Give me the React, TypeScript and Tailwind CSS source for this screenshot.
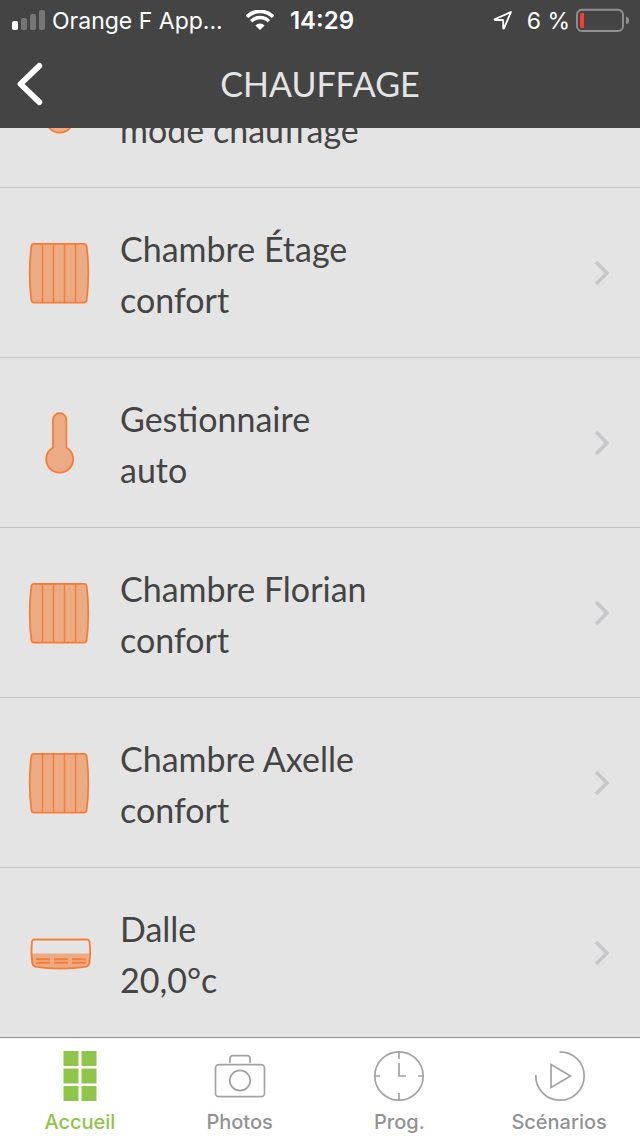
import React from "react";

type IconKind = "thermometer" | "radiator" | "floor";

type Device = { id: string; icon: IconKind; name: string; state: string };

const devices: Device[] = [
  { id: "mode", icon: "thermometer", name: "", state: "mode chauffage" },
  { id: "etage", icon: "radiator", name: "Chambre Étage", state: "confort" },
  { id: "gestionnaire", icon: "thermometer", name: "Gestionnaire", state: "auto" },
  { id: "florian", icon: "radiator", name: "Chambre Florian", state: "confort" },
  { id: "axelle", icon: "radiator", name: "Chambre Axelle", state: "confort" },
  { id: "dalle", icon: "floor", name: "Dalle", state: "20,0°c" },
];

function DeviceIcon({ kind }: { kind: IconKind }) {
  return (
    <svg className="size-16 shrink-0" viewBox="0 0 64 64" fill="none" stroke="#f97c34" strokeWidth="1.8" aria-hidden="true">
      {kind === "radiator" && (
        <>
          <path
            d="M6 2.8H56Q58.2 2.8 58.6 5Q62 32 58.6 59.3Q58.2 61.6 56 61.6H6Q3.8 61.6 3.4 59.3Q0 32 3.4 5Q3.8 2.8 6 2.8Z"
            fill="#ebab84"
          />
          <path d="M14.5 3V61.5M25.5 3V61.5M36.5 3V61.5M47.5 3V61.5" strokeWidth="1.5" />
        </>
      )}
      {kind === "thermometer" && (
        <path
          d="M25 36.5V8.9A6.7 6.7 0 0 1 38.4 8.9V36.5A13.5 13.5 0 1 1 25 36.5Z"
          fill="#ebab84"
        />
      )}
      {kind === "floor" && (
        <>
          <path d="M3.5 32.5H62Q62.3 44 59.5 45.5Q46 47.5 32.7 47.5Q19 47.5 6 45.5Q3.5 44 3.5 32.5Z" fill="#ebab84" stroke="none" />
          <path d="M6.5 18.5H59Q61 18.5 61.5 20.5Q63 32 61.2 42.5Q60.7 45 58.5 45.6Q46 47.6 32.7 47.6Q19 47.6 7 45.6Q4.8 45 4.4 42.5Q2.6 32 4 20.5Q4.5 18.5 6.5 18.5Z" />
          <path
            d="M8 38.3H22M26 38.3H40M44 38.3H58M8 41.8H22M26 41.8H40M44 41.8H58"
            strokeWidth="2"
          />
        </>
      )}
    </svg>
  );
}

function StatusBar() {
  return (
    <div className="grid h-10 grid-cols-[1fr_auto_1fr] items-center pl-3 pr-2 font-['Inter',sans-serif] text-[23px] leading-7 text-white">
      <div className="flex items-center">
        <svg className="h-5 w-[34px] shrink-0" viewBox="0 0 34 20" aria-hidden="true">
          <rect x="0" y="11" width="6" height="9" rx="1.8" fill="#fff" />
          <rect x="9" y="8" width="6" height="12" rx="1.8" fill="#757575" />
          <rect x="18" y="4" width="6" height="16" rx="1.8" fill="#757575" />
          <rect x="27" y="0" width="6" height="20" rx="1.8" fill="#757575" />
        </svg>
        <span className="ml-1.5 pt-0.5 whitespace-nowrap">Orange F App...</span>
        <svg className="ml-auto mr-4 h-5 w-7 shrink-0" viewBox="0 0 28 20" fill="none" stroke="#fff" aria-hidden="true">
          <path d="M.9 6.8A18.5 18.5 0 0 1 27.1 6.8" strokeWidth="3.7" />
          <path d="M5.2 11.2A12.5 12.5 0 0 1 22.8 11.2" strokeWidth="3.5" />
          <path d="M14 20L9.4 15.4A6.5 6.5 0 0 1 18.6 15.4Z" fill="#fff" stroke="none" />
        </svg>
      </div>
      <span className="pt-0.5 text-2xl leading-7 font-semibold">14:29</span>
      <div className="flex items-center justify-end">
        <svg className="mr-3.5 h-5 w-5" viewBox="0 0 20 20" fill="none" stroke="#fff" strokeWidth="1.8" strokeLinejoin="round" aria-hidden="true">
          <path d="M18 2L1.7 9.2Q1.4 9.8 2 10H9.6Q10.2 10 10.2 10.6V18.2Q10.6 18.9 11.1 18.2Z" />
        </svg>
        <span className="pt-0.5">6 %</span>
        <svg className="ml-1.5 h-6 w-14 shrink-0" viewBox="0 0 56 24" aria-hidden="true">
          <rect x="1" y="1.8" width="46" height="21.2" rx="5" fill="none" stroke="#919191" strokeWidth="1.9" />
          <path d="M50 8.5Q53 9.3 53 12.4T50 16.3Z" fill="#919191" />
          <path d="M8 5H6Q4 5 4 7V18Q4 20 6 20H8Z" fill="#ff3b30" />
        </svg>
      </div>
    </div>
  );
}

function DeviceRow({ device }: { device: Device }) {
  return (
    <li className="shrink-0 border-b border-[#c4c4c4] last:border-b-0">
      <button type="button" className="flex w-full items-center gap-7 pt-[33px] pr-7 pb-8 pl-7 text-left">
        <DeviceIcon kind={device.icon} />
        <span className="flex min-w-0 flex-1 flex-col pt-0.5 text-[34px] leading-[51px] text-[#444]">
          <span className="min-h-[51px]">{device.name}</span>
          <span>{device.state}</span>
        </span>
        <svg className="h-7 w-5 shrink-0" viewBox="0 0 20 28" fill="none" stroke="#c7c7cb" strokeWidth="3.6" aria-hidden="true">
          <path d="M4 3L15 14L4 25" />
        </svg>
      </button>
    </li>
  );
}

const tabs = [
  {
    label: "Accueil",
    active: true,
    icon: (
      <g fill="#8fc54a" stroke="none">
        <path d="M9.5 0h15v15h-15zM27.5 0h15v15h-15zM9.5 17.5h15v15h-15zM27.5 17.5h15v15h-15zM9.5 35h15v15h-15zM27.5 35h15v15h-15z" />
      </g>
    ),
  },
  {
    label: "Photos",
    active: false,
    icon: (
      <>
        <rect x="1.5" y="13.7" width="49" height="32" rx="3.5" />
        <circle cx="26" cy="29.5" r="10.2" />
        <path d="M16 12V7.5Q16 4.7 18.8 4.7H33.2Q36 4.7 36 7.5V12" />
      </>
    ),
  },
  {
    label: "Prog.",
    active: false,
    icon: (
      <>
        <circle cx="26" cy="25" r="24.2" />
        <path d="M26 1V8M26 42V49M2 25H7M45 25H50M26 12V25H33" />
      </>
    ),
  },
  {
    label: "Scénarios",
    active: false,
    icon: (
      <>
        <path d="M26.5 .8A24.2 24.2 0 1 1 2.8 24" />
        <path d="M18 13.5L37.5 25L18 36.5Z" />
      </>
    ),
  },
];

export default function App() {
  return (
    <div className="flex h-screen flex-col overflow-hidden bg-[#e4e4e4] font-['Lato',sans-serif]">
      <header className="shrink-0 bg-[#444]">
        <StatusBar />
        <div className="grid h-[88px] grid-cols-[64px_1fr_64px] items-center">
          <button type="button" aria-label="Retour" className="pl-4">
            <svg className="h-11 w-7" viewBox="0 0 28 44" fill="none" stroke="#fff" strokeWidth="5.8" strokeLinecap="round" strokeLinejoin="round" aria-hidden="true">
              <path d="M23.3 3.8L4.5 22L23.3 40.2" />
            </svg>
          </button>
          <h1 className="pb-0.5 text-center text-[34px] leading-[51px] text-[#e4e4e4]">CHAUFFAGE</h1>
        </div>
      </header>

      <main className="flex min-h-0 flex-1 flex-col justify-end overflow-hidden">
        <ul className="flex shrink-0 flex-col">
          {devices.map((d) => (
            <DeviceRow key={d.id} device={d} />
          ))}
        </ul>
      </main>

      <nav className="grid shrink-0 grid-cols-4 border-t border-[#8e8e8e] bg-white pr-px font-['Inter',sans-serif]">
        {tabs.map((t) => (
          <a
            key={t.label}
            href="#"
            aria-current={t.active ? "page" : undefined}
            className={
              t.active
                ? "flex flex-col items-center pt-3 text-[20px] leading-6 font-medium text-[#8fc54a]"
                : "flex flex-col items-center pt-3 text-[20px] leading-6 font-medium text-[#929292]"
            }
          >
            <svg className="h-[52px] w-[52px] overflow-visible" viewBox="0 -1 52 52" fill="none" stroke="#a3a3a3" strokeWidth="1.7" aria-hidden="true">
              {t.icon}
            </svg>
            <span className="mt-2 pb-0.5">{t.label}</span>
          </a>
        ))}
      </nav>
    </div>
  );
}
